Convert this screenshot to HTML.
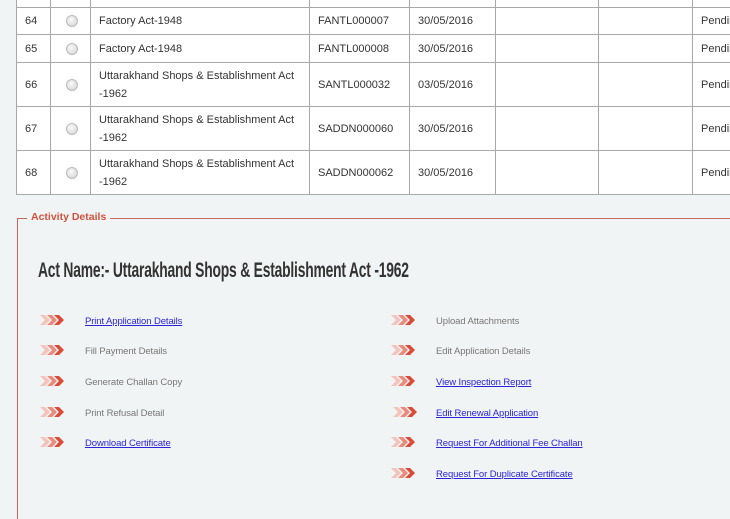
<!DOCTYPE html>
<html><head><meta charset="utf-8"><style>
body{margin:0;width:730px;height:494px;overflow:hidden;background:#f1f4f5;font-family:"Liberation Sans",sans-serif;position:relative}
table{position:absolute;left:16px;top:-21px;border-collapse:collapse;table-layout:fixed;width:736px;background:#fff;font-size:11px;color:#333}
td{border:1px solid #a8a8a8;padding:0 0 0 8px;vertical-align:middle;line-height:18px;overflow:hidden;white-space:nowrap}
td.w{white-space:normal}
.r{width:10px;height:10px;border-radius:50%;background:radial-gradient(circle at 40% 35%,#fafafa,#d0d0d0);border:1px solid #bbb;margin-left:7px}
.fs{position:absolute;left:17px;top:218px;width:730px;height:300px;border-top:1px solid #c9675a;border-left:1px solid #c9675a}
.lg{position:absolute;left:27px;top:211px;background:#f1f4f5;padding:0 4px;color:#d2503d;font-weight:bold;font-size:10.5px}
h1{position:absolute;left:38px;top:259px;margin:0;font-size:21px;font-weight:bold;color:#333;letter-spacing:-0.3px;white-space:nowrap;transform:scaleX(0.66);transform-origin:left}
.i{position:absolute;font-size:9.5px;color:#777;letter-spacing:-0.1px}
.i a{color:#2a24d8;text-decoration:underline}
.i svg{position:absolute;left:-45px;top:-1px}
</style></head><body>
<table>
<colgroup><col style="width:34px"><col style="width:40px"><col style="width:219px"><col style="width:100px"><col style="width:86px"><col style="width:103px"><col style="width:94px"><col style="width:60px"></colgroup>
<tr style="height:28px"><td></td><td></td><td></td><td></td><td></td><td></td><td></td><td></td></tr>
<tr style="height:27px"><td>64</td><td><div class="r"></div></td><td>Factory Act-1948</td><td>FANTL000007</td><td>30/05/2016</td><td></td><td></td><td>Pending</td></tr>
<tr style="height:28px"><td>65</td><td><div class="r"></div></td><td>Factory Act-1948</td><td>FANTL000008</td><td>30/05/2016</td><td></td><td></td><td>Pending</td></tr>
<tr style="height:44px"><td>66</td><td><div class="r"></div></td><td class="w">Uttarakhand Shops &amp; Establishment Act<br>-1962</td><td>SANTL000032</td><td>03/05/2016</td><td></td><td></td><td>Pending</td></tr>
<tr style="height:44px"><td>67</td><td><div class="r"></div></td><td class="w">Uttarakhand Shops &amp; Establishment Act<br>-1962</td><td>SADDN000060</td><td>30/05/2016</td><td></td><td></td><td>Pending</td></tr>
<tr style="height:44px"><td>68</td><td><div class="r"></div></td><td class="w">Uttarakhand Shops &amp; Establishment Act<br>-1962</td><td>SADDN000062</td><td>30/05/2016</td><td></td><td></td><td>Pending</td></tr>
</table>
<div class="fs"></div>
<div class="lg">Activity Details</div>
<h1>Act Name:- Uttarakhand Shops &amp; Establishment Act -1962</h1>
<svg width="0" height="0" style="position:absolute"><defs><g id="ar"><path d="M0 0h5l5 5-5 5H0l5-5z" fill="#f3c3bc"/><path d="M7 0h5l5 5-5 5H7l5-5z" fill="#ea8a7c"/><path d="M14 0h5l5 5-5 5h-5l5-5z" fill="#db4a36"/></g></defs></svg>
<div class="i" style="left:85px;top:316px"><svg width="24" height="11"><use href="#ar"/></svg><a>Print Application Details</a></div>
<div class="i" style="left:85px;top:346px"><svg width="24" height="11"><use href="#ar"/></svg>Fill Payment Details</div>
<div class="i" style="left:85px;top:377px"><svg width="24" height="11"><use href="#ar"/></svg>Generate Challan Copy</div>
<div class="i" style="left:85px;top:408px"><svg width="24" height="11"><use href="#ar"/></svg>Print Refusal Detail</div>
<div class="i" style="left:85px;top:438px"><svg width="24" height="11"><use href="#ar"/></svg><a>Download Certificate</a></div>
<div class="i" style="left:436px;top:316px"><svg width="24" height="11"><use href="#ar"/></svg>Upload Attachments</div>
<div class="i" style="left:436px;top:346px"><svg width="24" height="11"><use href="#ar"/></svg>Edit Application Details</div>
<div class="i" style="left:436px;top:377px"><svg width="24" height="11"><use href="#ar"/></svg><a>View Inspection Report</a></div>
<div class="i" style="left:436px;top:408px"><svg width="24" height="11" style="left:-43px"><use href="#ar"/></svg><a>Edit Renewal Application</a></div>
<div class="i" style="left:436px;top:438px"><svg width="24" height="11"><use href="#ar"/></svg><a>Request For Additional Fee Challan</a></div>
<div class="i" style="left:436px;top:469px"><svg width="24" height="11"><use href="#ar"/></svg><a>Request For Duplicate Certificate</a></div>
</body></html>
